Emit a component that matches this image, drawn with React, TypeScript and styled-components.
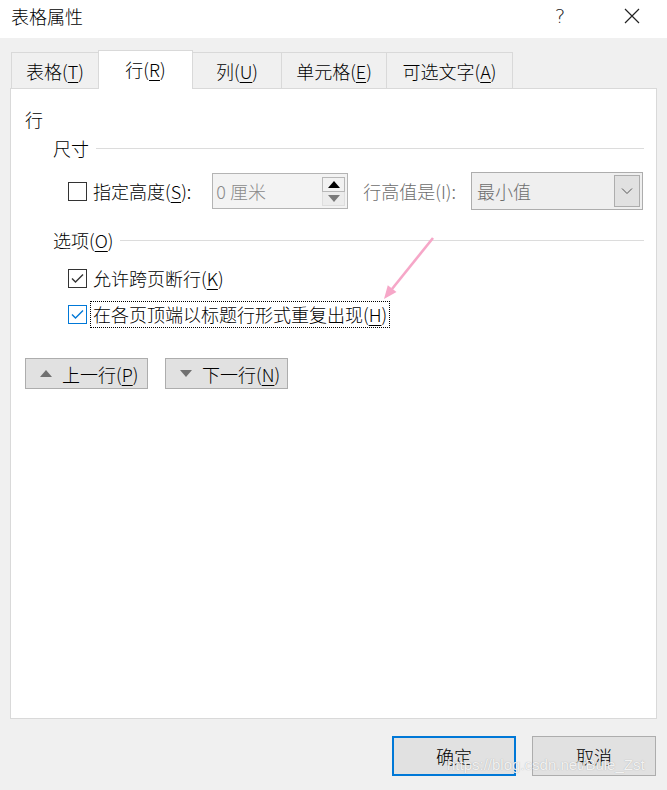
import React from "react";
import styled, { createGlobalStyle } from "styled-components";

const GlobalStyle = createGlobalStyle`
  html, body {
    margin: 0;
    padding: 0;
    background: #f0f0f0;
  }
  body {
    font-family: "Noto Sans CJK SC", "Noto Sans", sans-serif;
    font-weight: 300;
    color: #000;
  }
`;

const Window = styled.div`
  width: 667px;
  height: 790px;
  display: flex;
  flex-direction: column;
  background: #f0f0f0;
  position: relative;
  overflow: hidden;
`;

const TitleBar = styled.div`
  height: 38px;
  background: #fff;
  display: flex;
  align-items: flex-start;
  padding-left: 11px;
  box-sizing: border-box;
`;

const Title = styled.div`
  font-size: 18px;
  line-height: 32px;
  flex: 1;
`;

const TitleButton = styled.div`
  width: 46px;
  height: 32px;
  display: flex;
  align-items: center;
  justify-content: center;
  font-size: 20px;
  font-family: "DejaVu Sans", sans-serif;
  font-weight: 300;
  color: #222;
`;

const Help = styled(TitleButton)`
  margin-right: 26px;
`;

const Close = styled(TitleButton)`
  margin-right: 12px;
`;

const Body = styled.div`
  flex: 1;
  display: flex;
  flex-direction: column;
  padding: 12px 10px 0 10px;
`;

const TabRow = styled.div`
  display: flex;
  align-items: flex-end;
  height: 38px;
  padding-left: 1px;
`;

const Tab = styled.div<{ $active?: boolean; $w: number }>`
  width: ${(p) => p.$w}px;
  height: ${(p) => (p.$active ? 39 : 36)}px;
  box-sizing: border-box;
  margin-left: -1px;
  margin-bottom: ${(p) => (p.$active ? -1 : 0)}px;
  border: 1px solid #d9d9d9;
  border-bottom: none;
  background: ${(p) => (p.$active ? "#fff" : "#f0f0f0")};
  position: relative;
  z-index: ${(p) => (p.$active ? 2 : 1)};
  display: flex;
  align-items: center;
  justify-content: center;
  font-size: 18px;
  padding-bottom: ${(p) => (p.$active ? 3 : 0)}px;
  &:first-child {
    margin-left: 0;
  }
`;

const U = styled.span`
  text-decoration: underline;
  text-underline-offset: 3px;
  text-decoration-thickness: 1px;
`;

const Panel = styled.div`
  height: 631px;
  box-sizing: border-box;
  background: #fff;
  border: 1px solid #d9d9d9;
  position: relative;
  padding: 18px 12px 0 14px;
  display: flex;
  flex-direction: column;
`;

const Heading = styled.div`
  font-size: 18px;
  line-height: 24px;
`;

const Group = styled.div`
  padding-left: 28px;
  display: flex;
  flex-direction: column;
`;

const GroupHeader = styled.div<{ $top: number }>`
  display: flex;
  align-items: center;
  gap: 7px;
  font-size: 18px;
  line-height: 24px;
  margin-top: ${(p) => p.$top}px;
  &::after {
    content: "";
    flex: 1;
    height: 1px;
    background: #dcdcdc;
  }
`;

const Row = styled.div<{ $top: number; $h: number }>`
  display: flex;
  align-items: center;
  height: ${(p) => p.$h}px;
  margin-top: ${(p) => p.$top}px;
  padding-left: 15px;
`;

const Box = styled.span<{ $focus?: boolean }>`
  width: 19px;
  height: 19px;
  box-sizing: border-box;
  border: 1px solid ${(p) => (p.$focus ? "#0078d7" : "#333")};
  background: #fff;
  display: flex;
  align-items: center;
  justify-content: center;
  flex-shrink: 0;
`;

const Label = styled.span<{ $dim?: boolean; $focus?: boolean }>`
  font-size: 18px;
  line-height: 25px;
  color: ${(p) => (p.$dim ? "#6d6d6d" : "#000")};
  margin-left: ${(p) => (p.$focus ? 4 : 6)}px;
  padding: 0 ${(p) => (p.$focus ? 2 : 0)}px;
  outline: ${(p) => (p.$focus ? "1px dotted #000" : "none")};
  white-space: nowrap;
`;

const Spin = styled.div`
  width: 136px;
  height: 36px;
  box-sizing: border-box;
  margin-left: 21px;
  border: 1px solid #b4b4b4;
  background: #f3f3f3;
  display: flex;
  align-items: center;
  padding: 2px 2px 2px 3px;
`;

const SpinValue = styled.span`
  flex: 1;
  font-size: 18px;
  color: #8a8a8a;
`;

const SpinButtons = styled.div`
  width: 23px;
  height: 29px;
  display: flex;
  flex-direction: column;
`;

const SpinButton = styled.div<{ $up?: boolean }>`
  flex: 1;
  box-sizing: border-box;
  border: 1px solid ${(p) => (p.$up ? "#b8b8b8" : "#dedede")};
  background: ${(p) => (p.$up ? "#f2f2f2" : "#ececec")};
  display: flex;
  align-items: center;
  justify-content: center;
  & + & {
    border-top: none;
  }
`;

const HeightLabel = styled(Label)`
  margin-left: 15px;
`;

const Select = styled.div`
  width: 172px;
  height: 38px;
  box-sizing: border-box;
  margin-left: 15px;
  border: 1px solid #adadad;
  background: #efefef;
  display: flex;
  align-items: center;
  padding: 2px;
`;

const SelectValue = styled.span`
  flex: 1;
  font-size: 18px;
  color: #6d6d6d;
  padding-left: 3px;
`;

const SelectButton = styled.div`
  width: 26px;
  height: 32px;
  box-sizing: border-box;
  border: 1px solid #adadad;
  background: #e1e1e1;
  display: flex;
  align-items: center;
  justify-content: center;
`;

const NavRow = styled.div`
  display: flex;
  gap: 17px;
  margin-top: 30px;
`;

const NavButton = styled.div`
  width: 123px;
  height: 31px;
  box-sizing: border-box;
  border: 1px solid #adadad;
  background: #e1e1e1;
  display: flex;
  align-items: center;
  padding-left: 14px;
  gap: 10px;
  font-size: 18px;
`;

const Footer = styled.div`
  display: flex;
  justify-content: flex-end;
  gap: 16px;
  padding: 17px 0 0 0;
  margin-right: 1px;
`;

const DialogButton = styled.div<{ $default?: boolean }>`
  width: 124px;
  height: 40px;
  box-sizing: border-box;
  border: ${(p) => (p.$default ? "2px solid #0078d7" : "1px solid #adadad")};
  background: #e1e1e1;
  display: flex;
  align-items: center;
  justify-content: center;
  font-size: 18px;
`;

const Annotation = styled.svg`
  position: absolute;
  left: 360px;
  top: 140px;
  pointer-events: none;
`;

const Watermark = styled.div`
  position: absolute;
  left: 447px;
  top: 756px;
  font-family: "Liberation Sans Narrow", "Liberation Sans", sans-serif;
  font-size: 15px;
  line-height: 18px;
  color: rgba(255, 255, 255, 0.85);
  text-shadow: 0 0 1px rgba(120, 120, 120, 0.6);
  white-space: nowrap;
  pointer-events: none;
`;

const Check = ({ color }: { color: string }) => (
  <svg width="15" height="15" viewBox="0 0 15 15">
    <polyline points="2,7.5 5.5,11 13,3.5" fill="none" stroke={color} strokeWidth="1.4" />
  </svg>
);

const Triangle = ({ up, color }: { up?: boolean; color: string }) => (
  <svg width="12" height="7" viewBox="0 0 12 7">
    <polygon points={up ? "0,7 12,7 6,0" : "0,0 12,0 6,7"} fill={color} />
  </svg>
);

const tabs = [
  { label: "表格", key: "T", w: 88 },
  { label: "行", key: "R", w: 95, active: true },
  { label: "列", key: "U", w: 90 },
  { label: "单元格", key: "E", w: 106 },
  { label: "可选文字", key: "A", w: 127 },
];

const App = () => {
  return (
    <Window>
      <GlobalStyle />
      <TitleBar>
        <Title>表格属性</Title>
        <Help>?</Help>
        <Close>
          <svg width="16" height="16" viewBox="0 0 16 16">
            <path d="M1 1 L15 15 M15 1 L1 15" stroke="#222" strokeWidth="1.2" />
          </svg>
        </Close>
      </TitleBar>
      <Body>
        <TabRow>
          {tabs.map((t) => (
            <Tab key={t.key} $w={t.w} $active={t.active}>
              {t.label}(<U>{t.key}</U>)
            </Tab>
          ))}
        </TabRow>
        <Panel>
          <Heading>行</Heading>
          <Group>
            <GroupHeader $top={5}>尺寸</GroupHeader>
            <Row $top={12} $h={38}>
              <Box />
              <Label>
                指定高度(<U>S</U>):
              </Label>
              <Spin>
                <SpinValue>0 厘米</SpinValue>
                <SpinButtons>
                  <SpinButton $up>
                    <Triangle up color="#000" />
                  </SpinButton>
                  <SpinButton>
                    <Triangle color="#7a7a7a" />
                  </SpinButton>
                </SpinButtons>
              </Spin>
              <HeightLabel $dim>行高值是(I):</HeightLabel>
              <Select>
                <SelectValue>最小值</SelectValue>
                <SelectButton>
                  <svg width="12" height="8" viewBox="0 0 12 8">
                    <polyline points="1,1.5 6,6.5 11,1.5" fill="none" stroke="#555" strokeWidth="1" />
                  </svg>
                </SelectButton>
              </Select>
            </Row>
            <GroupHeader $top={18}>
              <span>
                选项(<U>O</U>)
              </span>
            </GroupHeader>
            <Row $top={12} $h={28}>
              <Box>
                <Check color="#333" />
              </Box>
              <Label>
                允许跨页断行(<U>K</U>)
              </Label>
            </Row>
            <Row $top={8} $h={28}>
              <Box $focus>
                <Check color="#0078d7" />
              </Box>
              <Label $focus>
                在各页顶端以标题行形式重复出现(<U>H</U>)
              </Label>
            </Row>
          </Group>
          <NavRow>
            <NavButton>
              <Triangle up color="#707070" />
              <span>
                上一行(<U>P</U>)
              </span>
            </NavButton>
            <NavButton>
              <Triangle color="#707070" />
              <span>
                下一行(<U>N</U>)
              </span>
            </NavButton>
          </NavRow>
          <Annotation width="80" height="80" viewBox="0 0 80 80">
            <line x1="62" y1="9" x2="21" y2="60" stroke="#f6a7c8" strokeWidth="2.6" />
            <polygon points="13,70 25.5,63 16.8,56.3" fill="#f6a7c8" />
          </Annotation>
        </Panel>
        <Footer>
          <DialogButton $default>确定</DialogButton>
          <DialogButton>取消</DialogButton>
        </Footer>
      </Body>
      <Watermark>https://blog.csdn.net/Bule_Zst</Watermark>
    </Window>
  );
};

export default App;
